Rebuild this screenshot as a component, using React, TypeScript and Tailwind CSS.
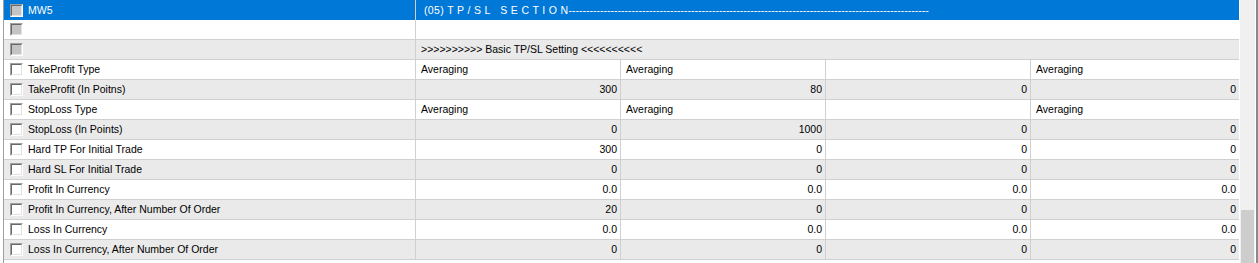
type Row = {
  label: string;
  values: string[];
  align: 'left' | 'right';
};

const rows: Row[] = [
  { label: 'TakeProfit Type', values: ['Averaging', 'Averaging', '', 'Averaging'], align: 'left' },
  { label: 'TakeProfit (In Poitns)', values: ['300', '80', '0', '0'], align: 'right' },
  { label: 'StopLoss Type', values: ['Averaging', 'Averaging', '', 'Averaging'], align: 'left' },
  { label: 'StopLoss (In Points)', values: ['0', '1000', '0', '0'], align: 'right' },
  { label: 'Hard TP For Initial Trade', values: ['300', '0', '0', '0'], align: 'right' },
  { label: 'Hard SL For Initial Trade', values: ['0', '0', '0', '0'], align: 'right' },
  { label: 'Profit In Currency', values: ['0.0', '0.0', '0.0', '0.0'], align: 'right' },
  { label: 'Profit In Currency, After Number Of Order', values: ['20', '0', '0', '0'], align: 'right' },
  { label: 'Loss In Currency', values: ['0.0', '0.0', '0.0', '0.0'], align: 'right' },
  { label: 'Loss In Currency, After Number Of Order', values: ['0', '0', '0', '0'], align: 'right' },
];

const Checkbox = ({ muted = false }: { muted?: boolean }) => (
  <span className="flex w-[13px] h-[13px] shrink-0 border border-t-[#a0a0a0] border-l-[#a0a0a0] border-r-white border-b-white">
    <span
      className={`block w-full h-full border border-t-[#696969] border-l-[#696969] border-r-[#e3e3e3] border-b-[#e3e3e3] ${
        muted ? 'bg-[#c4c4c4]' : 'bg-white'
      }`}
    />
  </span>
);

const LabelCell = ({ text, muted, light }: { text: string; muted?: boolean; light?: boolean }) => (
  <div className="flex items-center pl-[6px] border-r border-[#d0d0d0] overflow-hidden">
    <Checkbox muted={muted} />
    <span className={`ml-[5px] whitespace-nowrap ${light ? 'text-white' : 'text-black'}`}>{text}</span>
  </div>
);

const GRID = 'grid grid-cols-[412px_205px_205px_205px_208px] h-[20px] border-b border-[#d0d0d0] leading-[19px]';

export default function App() {
  const dashes = '-'.repeat(103);

  return (
    <div className="flex w-[1258px] h-[263px] overflow-hidden bg-white font-['Liberation_Sans',Arial,sans-serif] text-[10.5px] text-black">
      <div className="w-[3px] shrink-0 bg-white" />

      <div className="w-[1236px] shrink-0 border-l border-[#a0a0a0] flex flex-col">
        {/* section header */}
        <div className="grid grid-cols-[412px_823px] h-[20px] bg-[#0078d7] leading-[20px]">
          <LabelCell text="MW5" muted light />
          <div className="pl-[8px] text-white whitespace-pre overflow-hidden">
            <span className="tracking-[0.35px]">{'(05) T P / S L   S E C T I O N'}</span>
            {dashes}
          </div>
        </div>

        <div className="grid grid-cols-[412px_823px] h-[20px] bg-white border-b border-[#d0d0d0] leading-[19px]">
          <LabelCell text="" muted />
          <div />
        </div>

        <div className="grid grid-cols-[412px_823px] h-[20px] bg-[#eaeaea] border-b border-[#d0d0d0] leading-[19px]">
          <LabelCell text="" muted />
          <div className="pl-[5px] whitespace-pre">{'>>>>>>>>>> Basic TP/SL Setting <<<<<<<<<<'}</div>
        </div>

        {rows.map((row, i) => (
          <div key={row.label} className={`${GRID} ${i % 2 === 0 ? 'bg-white' : 'bg-[#eaeaea]'}`}>
            <LabelCell text={row.label} />
            {row.values.map((v, j) => (
              <div
                key={j}
                className={`whitespace-nowrap overflow-hidden ${j < 3 ? 'border-r border-[#d0d0d0]' : ''} ${
                  row.align === 'right' ? 'text-right pr-[3px]' : 'pl-[5px]'
                }`}
              >
                {v}
              </div>
            ))}
          </div>
        ))}
      </div>

      {/* vertical scrollbar */}
      <div className="flex w-[19px] shrink-0">
        <div className="w-px bg-white" />
        <div className="w-[15px] bg-[#f0f0f0] flex flex-col">
          <div className="h-[210px] shrink-0" />
          <div className="flex-1 mx-[1px] bg-[#cdcdcd]" />
        </div>
        <div className="w-px bg-white" />
        <div className="w-[2px] bg-[#8a8a8a]" />
      </div>
    </div>
  );
}
